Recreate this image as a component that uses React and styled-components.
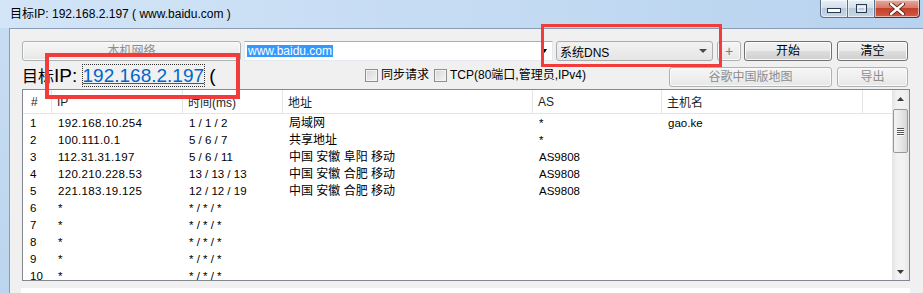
import React from "react";
import styled, { createGlobalStyle, css } from "styled-components";

const GlobalStyle = createGlobalStyle`
  html, body {
    margin: 0;
    padding: 0;
  }
  body {
    width: 923px;
    height: 293px;
    overflow: hidden;
    background: #f0f0f0;
    font-family: "Liberation Sans", "Noto Sans CJK SC", sans-serif;
    font-size: 12px;
    color: #000;
  }
`;

const hops = [
  { n: 1, ip: "192.168.10.254", time: "1 / 1 / 2", addr: "局域网", as: "*", host: "gao.ke" },
  { n: 2, ip: "100.111.0.1", time: "5 / 6 / 7", addr: "共享地址", as: "*", host: "" },
  { n: 3, ip: "112.31.31.197", time: "5 / 6 / 11", addr: "中国 安徽 阜阳 移动", as: "AS9808", host: "" },
  { n: 4, ip: "120.210.228.53", time: "13 / 13 / 13", addr: "中国 安徽 合肥 移动", as: "AS9808", host: "" },
  { n: 5, ip: "221.183.19.125", time: "12 / 12 / 19", addr: "中国 安徽 合肥 移动", as: "AS9808", host: "" },
  { n: 6, ip: "*", time: "* / * / *", addr: "", as: "", host: "" },
  { n: 7, ip: "*", time: "* / * / *", addr: "", as: "", host: "" },
  { n: 8, ip: "*", time: "* / * / *", addr: "", as: "", host: "" },
  { n: 9, ip: "*", time: "* / * / *", addr: "", as: "", host: "" },
  { n: 10, ip: "*", time: "* / * / *", addr: "", as: "", host: "" },
];

const columns = "29px 131px 100px 250px 129px 201px 1fr";

export default function App() {
  return (
    <Window>
      <GlobalStyle />
      <TitleBar>
        <TitleText>目标IP: 192.168.2.197 ( www.baidu.com )</TitleText>
        <CaptionButtons>
          <CaptionButton $w={28} $first>
            <svg width="14" height="6" viewBox="0 0 14 6">
              <rect x="0.5" y="0.5" width="13" height="4" fill="#fff" stroke="#2a3a4e" />
            </svg>
          </CaptionButton>
          <CaptionButton $w={27}>
            <svg width="11" height="9" viewBox="0 0 11 9">
              <rect x="0.5" y="0.5" width="10" height="8" fill="none" stroke="#2a3a4e" />
              <rect x="2" y="3" width="7" height="4" fill="none" stroke="#fff" />
            </svg>
          </CaptionButton>
          <CaptionButton $w={45} $close>
            <svg width="16" height="12" viewBox="0 0 16 12">
              <path d="M2 1 L14 11 M14 1 L2 11" stroke="#5a1a12" strokeWidth="4.2" strokeLinecap="round" />
              <path d="M2 1 L14 11 M14 1 L2 11" stroke="#fff" strokeWidth="2.4" strokeLinecap="round" />
            </svg>
          </CaptionButton>
        </CaptionButtons>
      </TitleBar>

      <Body>
        <Frame />
        <Client>
          <TopRow>
            <Button $w={219} disabled>本机网络</Button>
            <HostInput>
              <Selected>www.baidu.com</Selected>
              <SmallArrow width="5" height="4" viewBox="0 0 5 4">
                <path d="M0 0 H5 L2.5 4 Z" fill="#000" />
              </SmallArrow>
            </HostInput>
            <Combo>
              <span>系统DNS</span>
              <svg width="8" height="4" viewBox="0 0 8 4">
                <path d="M0 0 H8 L4 4 Z" fill="#4a4a4a" />
              </svg>
            </Combo>
            <Button $w={24} $ml={4} disabled $plus>+</Button>
            <Button $w={88} $ml={3}>开始</Button>
            <Button $w={71} $ml={5}>清空</Button>
          </TopRow>

          <SecondRow>
            <TargetLabel>
              <Cjk>目标</Cjk>IP: <TargetLink>192.168.2.197</TargetLink> (
            </TargetLabel>
            <Checks>
              <CheckItem>
                <Box />
                同步请求
              </CheckItem>
              <CheckItem>
                <Box />
                TCP(80端口,管理员,IPv4)
              </CheckItem>
            </Checks>
            <Button $w={163} $h={20} $mt={3} disabled>谷歌中国版地图</Button>
            <Button $w={71} $h={20} $mt={3} $ml={5} disabled>导出</Button>
          </SecondRow>

          <ListView>
            <ListArea>
              <HeaderRow>
                <HeadCell $first>#</HeadCell>
                <HeadCell>IP</HeadCell>
                <HeadCell>时间(ms)</HeadCell>
                <HeadCell>地址</HeadCell>
                <HeadCell>AS</HeadCell>
                <HeadCell>主机名</HeadCell>
                <HeadCell $blank />
              </HeaderRow>
              <Rows>
                {hops.map((h) => (
                  <Row key={h.n}>
                    <Cell $first>{h.n}</Cell>
                    <Cell $mono>{h.ip}</Cell>
                    <Cell>{h.time}</Cell>
                    <Cell $cjk>{h.addr}</Cell>
                    <Cell>{h.as}</Cell>
                    <Cell>{h.host}</Cell>
                    <Cell />
                  </Row>
                ))}
              </Rows>
            </ListArea>
            <ScrollBar>
              <ScrollArrow>
                <svg width="7" height="4" viewBox="0 0 7 4">
                  <path d="M0 4 L3.5 0 L7 4 Z" fill="#3c3c3c" />
                </svg>
              </ScrollArrow>
              <Track>
                <Thumb>
                  <Grip />
                  <Grip />
                  <Grip />
                  <Grip />
                </Thumb>
              </Track>
              <ScrollArrow>
                <svg width="7" height="4" viewBox="0 0 7 4">
                  <path d="M0 0 H7 L3.5 4 Z" fill="#3c3c3c" />
                </svg>
              </ScrollArrow>
            </ScrollBar>
          </ListView>

          <StatusField />
        </Client>
      </Body>

      <Marker $x={45} $y={53} $w={195} $h={46} $t={4} />
      <Marker $x={541} $y={24} $w={181} $h={43} $t={3} />
    </Window>
  );
}

const Window = styled.div`
  position: relative;
  width: 923px;
  height: 293px;
  display: flex;
  flex-direction: column;
  overflow: hidden;
`;

const TitleBar = styled.div`
  height: 28px;
  flex: 0 0 28px;
  display: flex;
  justify-content: space-between;
  align-items: flex-start;
  background: linear-gradient(to right, #d3e5f7 0%, #c6dcf3 45%, #b8d3ef 100%);
`;

const TitleText = styled.div`
  padding: 7px 0 0 10px;
  font-size: 12px;
  line-height: 15px;
  color: #000;
`;

const CaptionButtons = styled.div`
  display: flex;
  margin-right: 3px;
`;

const CaptionButton = styled.div`
  width: ${(p) => p.$w}px;
  height: 18px;
  box-sizing: border-box;
  display: flex;
  align-items: center;
  justify-content: center;
  border: 1px solid #5d7189;
  border-top: none;
  border-left: ${(p) => (p.$first ? "1px solid #5d7189" : "none")};
  border-radius: ${(p) => (p.$first ? "0 0 0 4px" : p.$close ? "0 0 4px 0" : "0")};
  background: linear-gradient(#e9eff6 0%, #d3dfec 45%, #b9cadd 50%, #c7d7e8 100%);
  box-shadow: inset 0 0 0 1px rgba(255, 255, 255, 0.55);

  ${(p) =>
    p.$close &&
    css`
      border-color: #6a2a22;
      background: linear-gradient(#e6a99d 0%, #d77a69 45%, #c2402c 50%, #d35a43 100%);
    `}

  svg {
    margin-top: ${(p) => (p.$first ? "5px" : "0")};
  }
`;

const Body = styled.div`
  flex: 1;
  display: flex;
  min-height: 0;
`;

const Frame = styled.div`
  width: 9px;
  flex: 0 0 9px;
  background: linear-gradient(#c6dcf2, #bcd5ee);
`;

const Client = styled.div`
  flex: 1;
  display: flex;
  flex-direction: column;
  border-left: 1px solid #8a9db4;
  border-top: 1px solid #8a9db4;
  background: #f0f0f0;
  padding: 12px 0 0 12px;
  overflow: hidden;

  & > * {
    flex: none;
  }
`;

const TopRow = styled.div`
  display: flex;
  align-items: center;
  height: 20px;
`;

const Button = styled.button`
  box-sizing: border-box;
  width: ${(p) => p.$w}px;
  height: ${(p) => p.$h || 20}px;
  margin: ${(p) => p.$mt || 0}px 0 0 ${(p) => p.$ml || 0}px;
  padding: 0;
  font-family: "Liberation Sans", "Noto Sans CJK SC", sans-serif;
  font-size: 12px;
  line-height: 16px;
  color: #000;
  border: 1px solid #707070;
  border-radius: 3px;
  background: linear-gradient(#f2f2f2 0%, #ebebeb 48%, #dddddd 52%, #cfcfcf 100%);
  box-shadow: inset 0 0 0 1px #fbfbfb;

  &:disabled {
    color: #8d8d8d;
    border-color: #adb2b5;
    background: linear-gradient(#f6f6f6 0%, #efefef 50%, #e6e6e6 100%);
    box-shadow: inset 0 0 0 1px #fafafa;
  }

  ${(p) =>
    p.$plus &&
    css`
      font-size: 14px;
      &:disabled {
        color: #6f7f93;
      }
    `}
`;

const HostInput = styled.div`
  box-sizing: border-box;
  width: 309px;
  height: 20px;
  margin-left: 3px;
  display: flex;
  align-items: center;
  justify-content: space-between;
  padding: 0 5px 0 2px;
  background: #fff;
  border: 1px solid #e3e9ef;
  border-top-color: #abadb3;
`;

const Selected = styled.span`
  background: #3399ff;
  color: #fff;
  font-size: 12px;
  line-height: 12px;
  padding: 0 1px;
`;

const SmallArrow = styled.svg`
  display: block;
`;

const Combo = styled.div`
  box-sizing: border-box;
  width: 157px;
  height: 20px;
  margin-left: 3px;
  display: flex;
  align-items: center;
  justify-content: space-between;
  padding: 0 5px 0 3px;
  border: 1px solid #acacac;
  border-radius: 3px;
  background: linear-gradient(#f2f2f2, #e5e5e5);
  font-size: 12px;
`;

const SecondRow = styled.div`
  display: flex;
  align-items: center;
  height: 28px;
`;

const TargetLabel = styled.div`
  flex: 0 0 343px;
  font-size: 19px;
  line-height: 23px;
  white-space: pre;
`;

const Cjk = styled.span`
  font-family: "Noto Sans CJK SC", sans-serif;
  font-size: 16px;
`;

const TargetLink = styled.span`
  color: #0066cc;
  text-decoration: underline;
  outline: 1px dotted #333;
`;

const Checks = styled.div`
  flex: 0 0 304px;
  display: flex;
  align-items: center;
  gap: 5px;
`;

const CheckItem = styled.label`
  display: flex;
  align-items: center;
  gap: 3px;
  font-size: 12px;
  line-height: 14px;
`;

const Box = styled.span`
  box-sizing: border-box;
  width: 13px;
  height: 13px;
  border: 1px solid #8e8f8f;
  background: linear-gradient(135deg, #d5d5d5, #f6f6f6);
  box-shadow: inset 0 0 0 1px #f4f4f4;
`;

const ListView = styled.div`
  box-sizing: border-box;
  width: 888px;
  height: 192px;
  display: flex;
  border: 1px solid #828790;
  background: #fff;
  overflow: hidden;
`;

const ListArea = styled.div`
  flex: 1;
  display: flex;
  flex-direction: column;
  min-width: 0;
  overflow: hidden;
`;

const HeaderRow = styled.div`
  flex: none;
  display: grid;
  grid-template-columns: ${columns};
  height: 24px;
  box-sizing: border-box;
  border-bottom: 1px solid #e5e5e5;
`;

const HeadCell = styled.div`
  display: flex;
  align-items: center;
  padding-left: ${(p) => (p.$first ? 8 : 5)}px;
  border-right: ${(p) => (p.$blank ? "none" : "1px solid #e5e5e5")};
  font-size: 12px;
  color: #1e1e1e;
  white-space: nowrap;
`;

const Rows = styled.div`
  flex: none;
  padding-top: 1px;
`;

const Row = styled.div`
  display: grid;
  grid-template-columns: ${columns};
  height: 17px;
  align-items: center;
`;

const Cell = styled.div`
  padding-left: ${(p) => (p.$first ? 7 : 6)}px;
  font-size: ${(p) => (p.$cjk ? 12 : 11.5)}px;
  letter-spacing: ${(p) => (p.$mono ? "0.3px" : "0")};
  line-height: 17px;
  white-space: nowrap;
  overflow: hidden;
`;

const ScrollBar = styled.div`
  width: 17px;
  flex: 0 0 17px;
  display: flex;
  flex-direction: column;
  background: linear-gradient(to right, #e3e3e3, #f2f2f2 30%, #f2f2f2 70%, #e8e8e8);
`;

const ScrollArrow = styled.div`
  height: 17px;
  flex: 0 0 17px;
  display: flex;
  align-items: center;
  justify-content: center;
`;

const Track = styled.div`
  flex: 1;
  padding-top: 2px;
`;

const Thumb = styled.div`
  box-sizing: border-box;
  width: 15px;
  height: 44px;
  margin-left: 1px;
  border: 1px solid #979797;
  border-radius: 2px;
  background: linear-gradient(to right, #f3f3f3, #e8e8e8 50%, #d6d6d6);
  display: flex;
  flex-direction: column;
  align-items: center;
  justify-content: center;
  gap: 1px;
`;

const Grip = styled.span`
  width: 7px;
  height: 1px;
  background: #555;
  box-shadow: 0 1px 0 #fff;
`;

const StatusField = styled.div`
  width: 889px;
  height: 10px;
  margin: 7px 0 0 -1px;
  background: #fff;
`;

const Marker = styled.div`
  position: absolute;
  left: ${(p) => p.$x}px;
  top: ${(p) => p.$y}px;
  width: ${(p) => p.$w}px;
  height: ${(p) => p.$h}px;
  box-sizing: border-box;
  border: ${(p) => p.$t}px solid #f23c3c;
  pointer-events: none;
`;
